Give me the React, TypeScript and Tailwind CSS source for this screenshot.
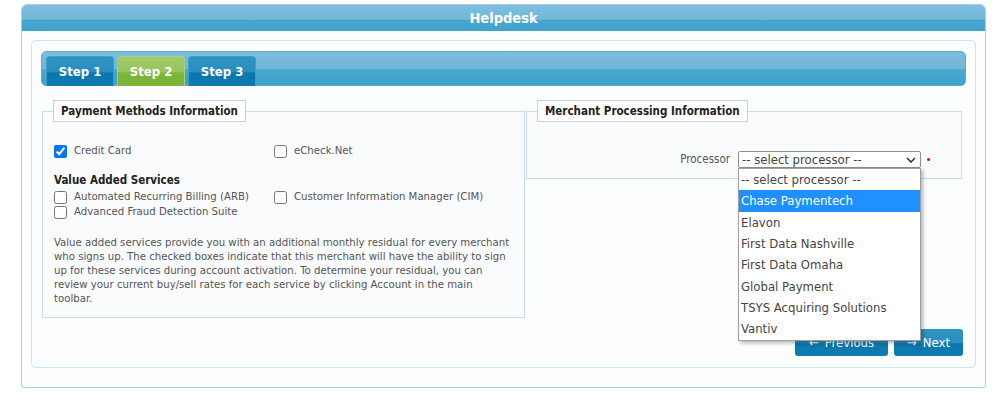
import React from "react";

const font = { fontFamily: '"DejaVu Sans Condensed", "DejaVu Sans", Tahoma, sans-serif' };

function Check({ checked = false, label }: { checked?: boolean; label: string }) {
  return (
    <label className="flex items-center h-[15px] text-[11.3px] text-[#555]">
      <input type="checkbox" defaultChecked={checked} className="m-0 w-[13px] h-[13px] shrink-0" />
      <span className="ml-[7px] whitespace-nowrap">{label}</span>
    </label>
  );
}

const items = [
  "-- select processor --",
  "Chase Paymentech",
  "Elavon",
  "First Data Nashville",
  "First Data Omaha",
  "Global Payment",
  "TSYS Acquiring Solutions",
  "Vantiv",
];

export default function App() {
  return (
    <div className="min-h-[401px] bg-white pt-[4px]" style={font}>
      <div className="ml-[21px] w-[965px] border border-[#a9cbe4] rounded-t-[6px] rounded-b-[3px] bg-[#fcfeff]">
        <div className="h-[26px] pt-[1px] rounded-t-[5px] bg-[linear-gradient(to_bottom,#7cbedd_0%,#73b8d8_55%,#4aa8cf_58%,#40a2cc_100%)] flex items-center justify-center text-white font-bold text-[14.5px]">
          Helpdesk
        </div>
        <div className="pt-[9px] px-[9px] pb-[19px]">
          <div className="border border-[#c6e7f6] rounded-[5px] pt-[10px] px-[9px] pb-[11px]">
            <div className="h-[35px] rounded-[5px] border border-[#5ea9d2] bg-[linear-gradient(to_bottom,#7abcdc_0%,#72b7d8_50%,#49a7cf_54%,#3fa1cb_100%)] pl-[4px] pt-[4px] flex gap-[3px]">
              <div className="w-[68px] h-[30px] rounded-t-[4px] bg-[linear-gradient(to_bottom,#2f93c3_0%,#2a8fc0_50%,#0a77ad_55%,#0d7bb1_100%)] flex items-center justify-center text-white font-bold text-[13px] border-t border-x border-[#3f9ccb]">
                Step 1
              </div>
              <div className="w-[68px] h-[30px] rounded-t-[4px] bg-[linear-gradient(to_bottom,#a0cb68_0%,#98c55e_50%,#7db53b_55%,#7bb338_100%)] flex items-center justify-center text-white font-bold text-[13px] border-t border-x border-[#a9d077]">
                Step 2
              </div>
              <div className="w-[68px] h-[30px] rounded-t-[4px] bg-[linear-gradient(to_bottom,#2f93c3_0%,#2a8fc0_50%,#0a77ad_55%,#0d7bb1_100%)] flex items-center justify-center text-white font-bold text-[13px] border-t border-x border-[#3f9ccb]">
                Step 3
              </div>
            </div>

            <div className="mt-[14px] pl-[1px] flex items-start">
              <fieldset className="w-[483px] border border-[#c9dcea] bg-[#f9fbfc] px-[11px] pb-[11px]">
                <legend className="-ml-[1px] h-[22px] px-[7px] border border-[#cfcfcf] bg-white text-[11.5px] font-bold text-[#222] leading-[20px]">
                  Payment Methods Information
                </legend>
                <div className="mt-[22px] flex">
                  <div className="w-[220px]"><Check checked label="Credit Card" /></div>
                  <Check label="eCheck.Net" />
                </div>
                <div className="mt-[14px] text-[11.5px] font-bold text-[#222] leading-[15px]">Value Added Services</div>
                <div className="mt-[2px] flex">
                  <div className="w-[220px]"><Check label="Automated Recurring Billing (ARB)" /></div>
                  <Check label="Customer Information Manager (CIM)" />
                </div>
                <Check label="Advanced Fraud Detection Suite" />
                <p className="mt-[16px] text-[11.3px] leading-[14px] text-[#555] whitespace-nowrap">
                  Value added services provide you with an additional monthly residual for every merchant<br />
                  who signs up. The checked boxes indicate that this merchant will have the ability to sign<br />
                  up for these services during account activation. To determine your residual, you can<br />
                  review your current buy/sell rates for each service by clicking Account in the main<br />
                  toolbar.
                </p>
              </fieldset>

              <fieldset className="ml-[1px] w-[436px] border border-[#c9dcea] bg-[#f9fbfc] px-[10px] pb-[10px]">
                <legend className="h-[22px] px-[7px] border border-[#cfcfcf] bg-white text-[11.5px] font-bold text-[#222] leading-[20px]">
                  Merchant Processing Information
                </legend>
                <div className="mt-[29px] flex items-center -ml-[10px]">
                  <div className="w-[203px] text-right text-[11.5px] text-[#555]">Processor</div>
                  <div className="relative ml-[8px]">
                    <div className="w-[183px] h-[17px] border border-[#8f8f8f] rounded-[2px] bg-white flex items-center pl-[3px] text-[13px] text-[#444]">
                      <span className="flex-1 leading-[15px]">-- select processor --</span>
                      <svg width="10" height="6" viewBox="0 0 10 6" className="mr-[4px]">
                        <path d="M1 1 L5 5 L9 1" fill="none" stroke="#222" strokeWidth="1.4" />
                      </svg>
                    </div>
                    <div className="absolute left-0 top-[17px] w-[183px] bg-white border border-[#a0a0a0] shadow-[2px_2px_4px_rgba(0,0,0,0.3)] z-10">
                      {items.map((it, i) => (
                        <div
                          key={it}
                          className={
                            i === 1
                              ? "h-[21.3px] flex items-center pl-[2px] text-[13px] bg-[#1e90ff] text-white"
                              : "h-[21.3px] flex items-center pl-[2px] text-[13px] text-[#444]"
                          }
                        >
                          {it}
                        </div>
                      ))}
                    </div>
                  </div>
                  <div className="ml-[6px] w-[3px] h-[3px] rounded-full bg-[#ff0000]" />
                </div>
              </fieldset>
            </div>

            <div className="mt-[11px] flex justify-end gap-[6px] pr-[3px]">
              <button className="w-[93px] h-[27px] rounded-[3px] bg-[linear-gradient(to_bottom,#2f93c3_0%,#2a8fc0_50%,#0a77ad_55%,#0f7cb2_100%)] text-white text-[13px] flex items-center justify-center gap-[6px]">
                <span>←</span><span>Previous</span>
              </button>
              <button className="w-[69px] h-[27px] rounded-[3px] bg-[linear-gradient(to_bottom,#2f93c3_0%,#2a8fc0_50%,#0a77ad_55%,#0f7cb2_100%)] text-white text-[13px] flex items-center justify-center gap-[6px]">
                <span>→</span><span>Next</span>
              </button>
            </div>
          </div>
        </div>
      </div>
    </div>
  );
}
